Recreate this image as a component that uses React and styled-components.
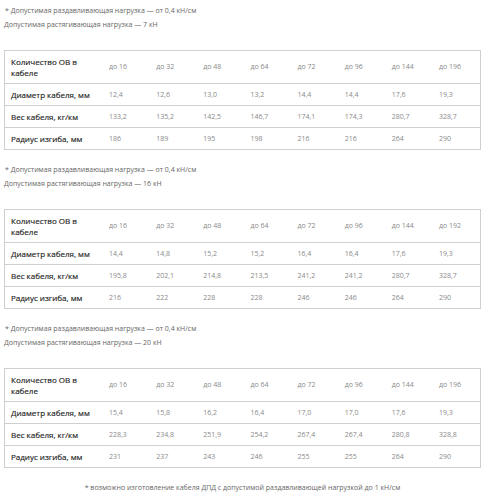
import React from "react";
import styled, { createGlobalStyle } from "styled-components";

const Global = createGlobalStyle`
  html, body { margin: 0; padding: 0; background: #fff; }
  body { font-family: "Open Sans", "Liberation Sans", sans-serif; }
`;

const Page = styled.div`
  width: 485px;
  padding: 0 4px 0 4px;
  box-sizing: border-box;
`;

const Block = styled.section`
  padding-top: 6px;
  padding-bottom: 9px;
`;

const Note = styled.p`
  margin: 0 0 ${(p) => p.$gap || 0}px ${(p) => p.$indent || 0}px;
  font-size: 7px;
  line-height: 10px;
  color: #666;
`;

const Table = styled.div`
  margin-top: 20px;
  border: 1px solid #cfcfcf;
`;

const Row = styled.div`
  display: grid;
  grid-template-columns: 98px repeat(8, 1fr);
  align-items: center;
  box-sizing: border-box;
  height: ${(p) => (p.$head ? 33 : 22)}px;
  border-bottom: 1px solid #cfcfcf;
  &:last-child { border-bottom: none; height: 21px; }
`;

const Label = styled.div`
  padding: 0 0 0 6px;
  max-width: ${(p) => (p.$wrap ? "70px" : "none")};
  white-space: ${(p) => (p.$wrap ? "normal" : "nowrap")};
  font-size: 8px;
  line-height: 11px;
  font-weight: 400;
  color: #222;
  -webkit-text-stroke: 0.15px #222;
`;

const Cell = styled.div`
  padding-left: 6px;
  font-size: 7px;
  line-height: 10px;
  color: #8a8a8a;
  white-space: nowrap;
`;

const Footer = styled.p`
  margin: 6px 0 0;
  text-align: center;
  font-size: 7px;
  line-height: 10px;
  color: #666;
`;

const labels = ["Диаметр кабеля, мм", "Вес кабеля, кг/км", "Радиус изгиба, мм"];

const data = [
  {
    force: "7",
    head: ["до 16", "до 32", "до 48", "до 64", "до 72", "до 96", "до 144", "до 196"],
    rows: [
      ["12,4", "12,6", "13,0", "13,2", "14,4", "14,4", "17,6", "19,3"],
      ["133,2", "135,2", "142,5", "146,7", "174,1", "174,3", "280,7", "328,7"],
      ["186", "189", "195", "198", "216", "216", "264", "290"],
    ],
  },
  {
    force: "16",
    head: ["до 16", "до 32", "до 48", "до 64", "до 72", "до 96", "до 144", "до 192"],
    rows: [
      ["14,4", "14,8", "15,2", "15,2", "16,4", "16,4", "17,6", "19,3"],
      ["195,8", "202,1", "214,8", "213,5", "241,2", "241,2", "280,7", "328,7"],
      ["216", "222", "228", "228", "246", "246", "264", "290"],
    ],
  },
  {
    force: "20",
    head: ["до 16", "до 32", "до 48", "до 64", "до 72", "до 96", "до 144", "до 196"],
    rows: [
      ["15,4", "15,8", "16,2", "16,4", "17,0", "17,0", "17,6", "19,3"],
      ["228,3", "234,8", "251,9", "254,2", "267,4", "267,4", "280,8", "328,8"],
      ["231", "237", "243", "246", "255", "255", "264", "290"],
    ],
  },
];

export default function App() {
  return (
    <Page>
      <Global />
      {data.map((b, i) => (
        <Block key={i}>
          <Note $gap={4} $indent={1}>* Допустимая раздавливающая нагрузка — от 0,4 кН/см</Note>
          <Note>Допустимая растягивающая нагрузка — {b.force} кН</Note>
          <Table>
            <Row $head>
              <Label $wrap>Количество ОВ в кабеле</Label>
              {b.head.map((h, j) => (
                <Cell key={j}>{h}</Cell>
              ))}
            </Row>
            {b.rows.map((r, k) => (
              <Row key={k}>
                <Label>{labels[k]}</Label>
                {r.map((v, j) => (
                  <Cell key={j}>{v}</Cell>
                ))}
              </Row>
            ))}
          </Table>
        </Block>
      ))}
      <Footer>* возможно изготовление кабеля ДПД с допустимой раздавливающей нагрузкой до 1 кН/см</Footer>
    </Page>
  );
}
